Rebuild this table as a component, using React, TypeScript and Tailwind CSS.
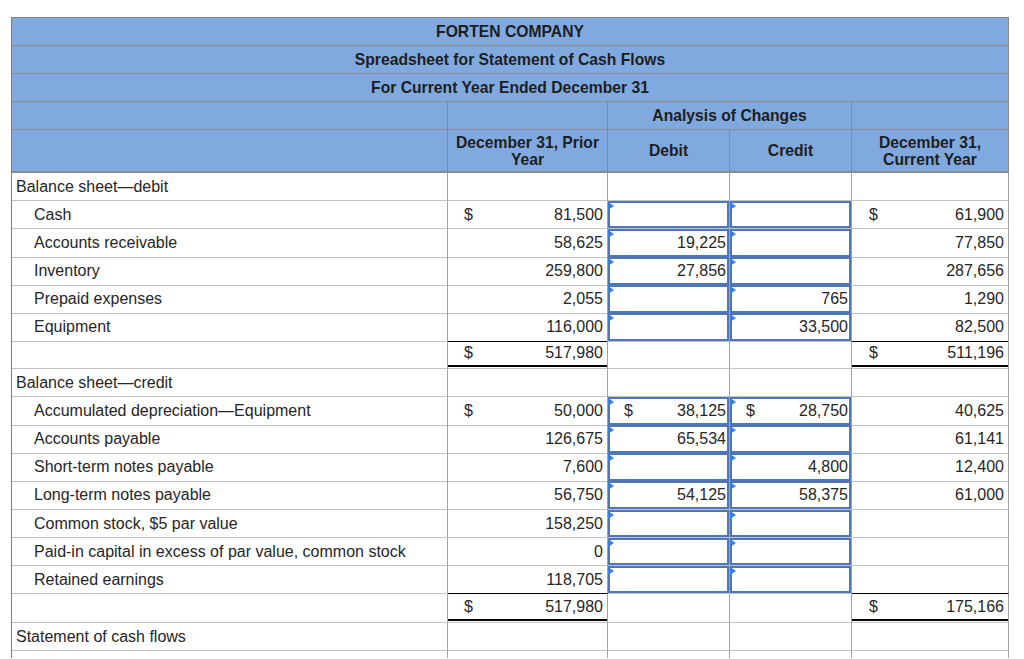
import React from 'react';

type Item = {
  kind: 'item';
  label: string;
  prior: string;
  priorSign?: boolean;
  debit?: string;
  debitSign?: boolean;
  credit?: string;
  creditSign?: boolean;
  current?: string;
  currentSign?: boolean;
  underline?: boolean;
  tall?: boolean;
};

type Row =
  | { kind: 'section'; label: string }
  | Item
  | { kind: 'total'; prior: string; current: string; tall?: boolean };

const rows: Row[] = [
  { kind: 'section', label: 'Balance sheet—debit' },
  { kind: 'item', label: 'Cash', prior: '81,500', priorSign: true, current: '61,900', currentSign: true },
  { kind: 'item', label: 'Accounts receivable', prior: '58,625', debit: '19,225', current: '77,850' },
  { kind: 'item', label: 'Inventory', prior: '259,800', debit: '27,856', current: '287,656' },
  { kind: 'item', label: 'Prepaid expenses', prior: '2,055', credit: '765', current: '1,290' },
  { kind: 'item', label: 'Equipment', prior: '116,000', credit: '33,500', current: '82,500', underline: true },
  { kind: 'total', prior: '517,980', current: '511,196' },
  { kind: 'section', label: 'Balance sheet—credit' },
  {
    kind: 'item',
    label: 'Accumulated depreciation—Equipment',
    prior: '50,000',
    priorSign: true,
    debit: '38,125',
    debitSign: true,
    credit: '28,750',
    creditSign: true,
    current: '40,625',
  },
  { kind: 'item', label: 'Accounts payable', prior: '126,675', debit: '65,534', current: '61,141' },
  { kind: 'item', label: 'Short-term notes payable', prior: '7,600', credit: '4,800', current: '12,400' },
  { kind: 'item', label: 'Long-term notes payable', prior: '56,750', debit: '54,125', credit: '58,375', current: '61,000', tall: true },
  { kind: 'item', label: 'Common stock, $5 par value', prior: '158,250' },
  { kind: 'item', label: 'Paid-in capital in excess of par value, common stock', prior: '0' },
  { kind: 'item', label: 'Retained earnings', prior: '118,705', underline: true },
  { kind: 'total', prior: '517,980', current: '175,166', tall: true },
  { kind: 'section', label: 'Statement of cash flows' },
];

const grid = 'grid grid-cols-[436px_160px_122px_122px_157px]';
const cell = 'border-r border-b border-r-[#a2a2a2] border-b-[#c2c2c2]';
const head = 'border-r border-b border-[#8b8b8b] bg-[#80aadf] font-bold text-[#1e1e1e] text-[15.7px]';

const Money = ({ sign, value, pl }: { sign?: boolean; value?: string; pl: string }) => (
  <div className={`flex h-full items-center justify-between pr-1 ${pl}`}>
    <span>{sign ? '$' : ''}</span>
    <span>{value ?? ''}</span>
  </div>
);

const InputBox = ({ sign, value }: { sign?: boolean; value?: string }) => (
  <div className="relative flex h-full items-center justify-between border-2 border-[#4f77b8] pl-[14px] pr-[1px]">
    <span className="absolute -left-[2px] -top-[1px] h-0 w-0 border-y-[4px] border-l-[6px] border-y-transparent border-l-[#3b7dd8]" />
    <span>{sign ? '$' : ''}</span>
    <span>{value ?? ''}</span>
  </div>
);

const DataRow = ({ row }: { row: Row }) => {
  if (row.kind === 'section') {
    return (
      <div className={`${grid} h-[28px]`}>
        <div className={`${cell} flex items-center pl-1`}>{row.label}</div>
        <div className={cell} />
        <div className={cell} />
        <div className={cell} />
        <div className={cell} />
      </div>
    );
  }
  if (row.kind === 'total') {
    const inner = row.tall ? 'h-[27px]' : 'h-[26px]';
    return (
      <div className={`${grid} ${row.tall ? 'h-[29px]' : 'h-[28px]'}`}>
        <div className={cell} />
        <div className={cell}>
          <div className={`${inner} border-b-2 border-black`}>
            <Money sign value={row.prior} pl="pl-4" />
          </div>
        </div>
        <div className={cell} />
        <div className={cell} />
        <div className={cell}>
          <div className={`${inner} border-b-2 border-black`}>
            <Money sign value={row.current} pl="pl-[17px]" />
          </div>
        </div>
      </div>
    );
  }
  const line = row.underline ? 'border-b-black' : '';
  return (
    <div className={`${grid} ${row.tall ? 'h-[29px]' : 'h-[28px]'}`}>
      <div className={`${cell} flex items-center pl-[22px]`}>{row.label}</div>
      <div className={`${cell} ${line}`}>
        <Money sign={row.priorSign} value={row.prior} pl="pl-4" />
      </div>
      <div className={cell}>
        <InputBox sign={row.debitSign} value={row.debit} />
      </div>
      <div className={cell}>
        <InputBox sign={row.creditSign} value={row.credit} />
      </div>
      <div className={`${cell} ${line}`}>
        <Money sign={row.currentSign} value={row.current} pl="pl-[17px]" />
      </div>
    </div>
  );
};

export default function App() {
  return (
    <div className="min-h-[659px] bg-white pt-[17px] pl-[11px] font-['Liberation_Sans',Arial,sans-serif] text-[16px] text-[#262626]">
      <div className="w-[998px] border-l border-t border-[#7f7f7f]">
        <div className={`${head} flex h-[28px] items-center justify-center`}>FORTEN COMPANY</div>
        <div className={`${head} flex h-[28px] items-center justify-center`}>Spreadsheet for Statement of Cash Flows</div>
        <div className={`${head} flex h-[28px] items-center justify-center`}>For Current Year Ended December 31</div>
        <div className={`${grid} h-[28px]`}>
          <div className={head} />
          <div className={head} />
          <div className={`${head} col-span-2 flex items-center justify-center`}>Analysis of Changes</div>
          <div className={head} />
        </div>
        <div className={`${grid} h-[43px] leading-[17px]`}>
          <div className={`${head} border-b-2`} />
          <div className={`${head} border-b-2 flex items-center justify-center px-1 text-center`}>
            December 31, Prior Year
          </div>
          <div className={`${head} border-b-2 flex items-center justify-center`}>Debit</div>
          <div className={`${head} border-b-2 flex items-center justify-center`}>Credit</div>
          <div className={`${head} border-b-2 flex items-center justify-center px-4 text-center`}>
            December 31, Current Year
          </div>
        </div>
        {rows.map((row, i) => (
          <DataRow key={i} row={row} />
        ))}
        <div className={`${grid} h-[7px]`}>
          <div className="border-r border-r-[#a2a2a2]" />
          <div className="border-r border-r-[#a2a2a2]" />
          <div className="border-r border-r-[#a2a2a2]" />
          <div className="border-r border-r-[#a2a2a2]" />
          <div className="border-r border-r-[#a2a2a2]" />
        </div>
      </div>
    </div>
  );
}
